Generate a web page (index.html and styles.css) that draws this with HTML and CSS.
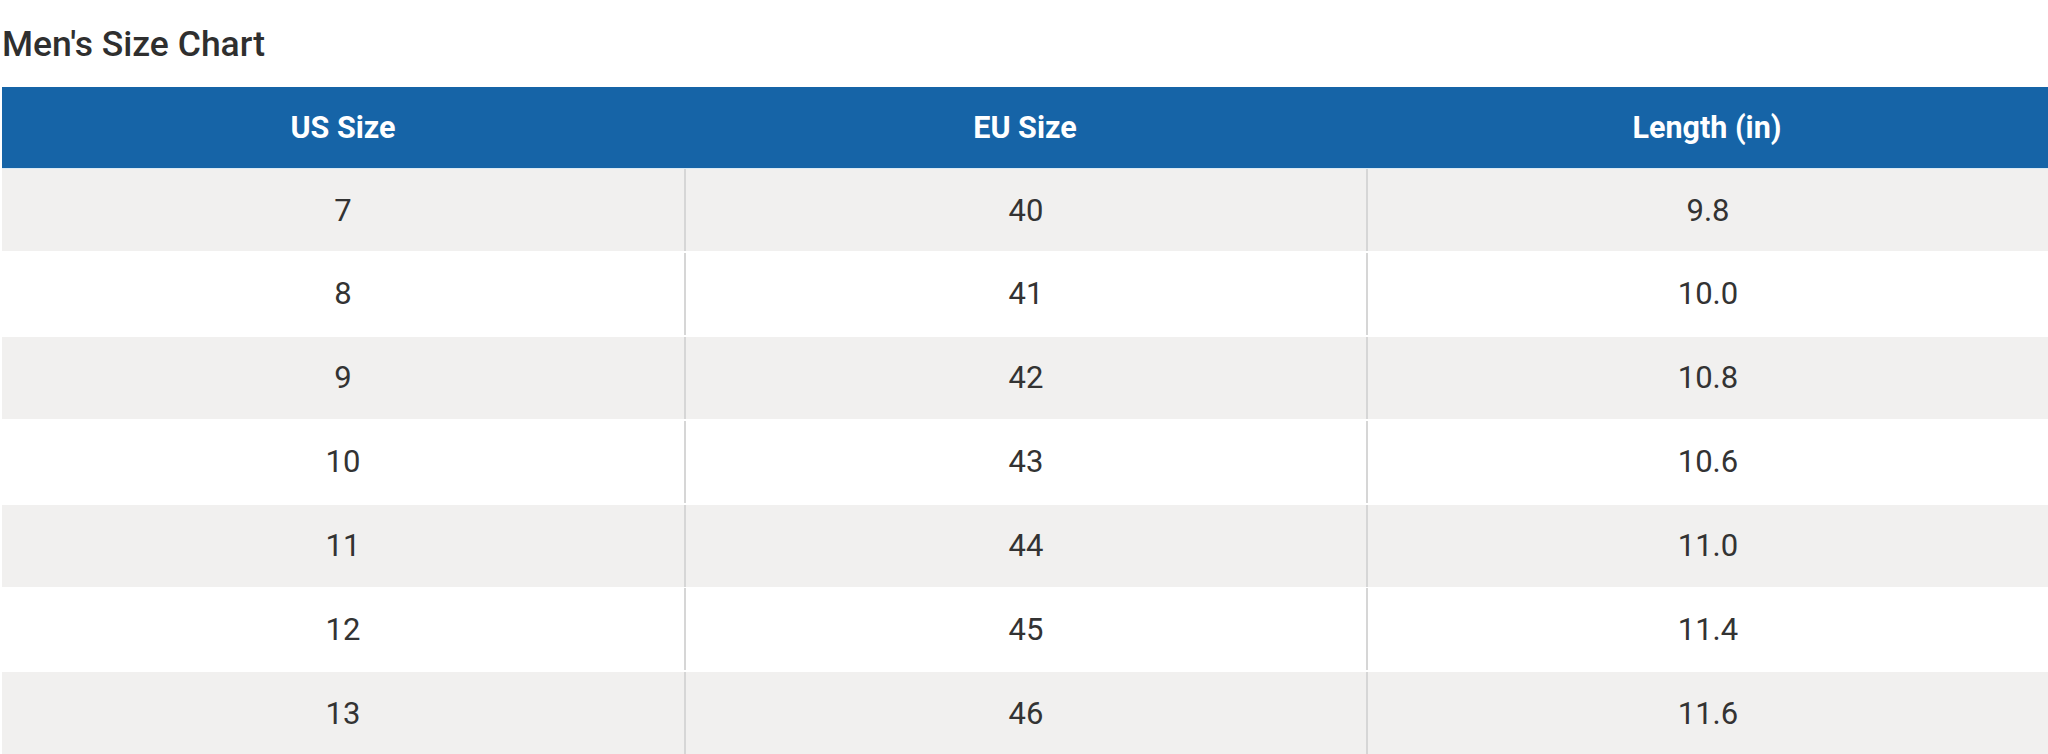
FILE: index.html
```html
<!DOCTYPE html>
<html>
<head>
<meta charset="utf-8">
<link rel="stylesheet" href="styles.css">
</head>
<body>
<div class="page">
  <h2 class="title">Men's Size Chart</h2>
  <div class="chart">
    <div class="head">
      <div class="hcell">US Size</div>
      <div class="hcell">EU Size</div>
      <div class="hcell">Length (in)</div>
    </div>
    <div class="row alt"><div class="cell">7</div><div class="cell">40</div><div class="cell">9.8</div></div>
    <div class="row"><div class="cell">8</div><div class="cell">41</div><div class="cell">10.0</div></div>
    <div class="row alt"><div class="cell">9</div><div class="cell">42</div><div class="cell">10.8</div></div>
    <div class="row"><div class="cell">10</div><div class="cell">43</div><div class="cell">10.6</div></div>
    <div class="row alt"><div class="cell">11</div><div class="cell">44</div><div class="cell">11.0</div></div>
    <div class="row"><div class="cell">12</div><div class="cell">45</div><div class="cell">11.4</div></div>
    <div class="row alt"><div class="cell">13</div><div class="cell">46</div><div class="cell">11.6</div></div>
  </div>
</div>
</body>
</html>
```
FILE: styles.css
```css
html, body {
  margin: 0;
  padding: 0;
  background: #ffffff;
  overflow: hidden;
}
.page {
  padding: 24px 0 0 2px;
  font-family: Roboto, "Liberation Sans", sans-serif;
  color: #333333;
}
.title {
  margin: 0 0 23px 0;
  font-size: 35.5px;
  line-height: 40px;
  font-weight: 500;
  color: #2f2f2f;
}
.chart {
  width: 2046px;
}
.head {
  display: grid;
  grid-template-columns: repeat(3, 1fr);
  height: 81px;
  background: #1664a7;
  border-bottom: 1px solid #d9eaf5;
}
.hcell {
  display: flex;
  align-items: center;
  justify-content: center;
  color: #ffffff;
  font-size: 30.5px;
  font-weight: 700;
}
.row {
  display: grid;
  grid-template-columns: repeat(3, 1fr);
  height: 82px;
  margin-top: 1.9px;
  background: #ffffff;
}
.head + .row {
  margin-top: 0;
}
.row.alt {
  background: #f1f0ef;
}
.cell {
  display: flex;
  align-items: center;
  justify-content: center;
  font-size: 31px;
  color: #333333;
}
.cell + .cell {
  border-left: 2px solid #d6d6d6;
}
```
